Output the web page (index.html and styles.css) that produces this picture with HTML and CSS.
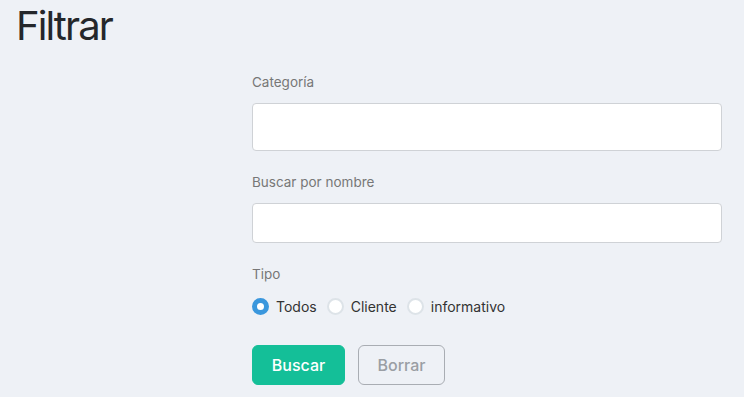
FILE: index.html
```html
<!DOCTYPE html>
<html lang="es">
<head>
<meta charset="utf-8">
<title>Filtrar</title>
<link rel="stylesheet" href="styles.css">
</head>
<body>
<h1 class="title">Filtrar</h1>
<form class="filter">
  <div class="field">
    <label class="label" for="cat">Categoría</label>
    <input class="input input-lg" id="cat" type="text">
  </div>
  <div class="field">
    <label class="label" for="name">Buscar por nombre</label>
    <input class="input" id="name" type="text">
  </div>
  <div class="field">
    <span class="label">Tipo</span>
    <div class="radios">
      <label class="radio"><span class="dot checked"></span>Todos</label>
      <label class="radio"><span class="dot"></span>Cliente</label>
      <label class="radio"><span class="dot"></span>informativo</label>
    </div>
  </div>
  <div class="actions">
    <button type="button" class="btn btn-primary">Buscar</button>
    <button type="button" class="btn btn-outline">Borrar</button>
  </div>
</form>
</body>
</html>
```
FILE: styles.css
```css
* { box-sizing: border-box; }
html, body { margin: 0; padding: 0; }
body {
  background: #eef1f6;
  font-family: Inter, "Noto Sans", sans-serif;
  color: #333;
  width: 744px;
  height: 397px;
  overflow: hidden;
}
.title {
  margin: 0;
  padding: 2px 0 0 16px;
  font-size: 40px;
  font-weight: 400;
  letter-spacing: -1.9px;
  color: #24272b;
  line-height: 48px;
}
.filter {
  margin-left: 252px;
  width: 470px;
  padding-top: 20px;
  display: flex;
  flex-direction: column;
}
.field {
  display: flex;
  flex-direction: column;
  margin-bottom: 19px;
}
.label {
  font-size: 13.5px;
  color: #777;
  line-height: 24px;
  margin-bottom: 9px;
}
.input {
  height: 40px;
  background: #fff;
  border: 1px solid #cfd2d6;
  border-radius: 4px;
  outline: none;
}
.input-lg { height: 48px; }
.radios {
  display: flex;
  gap: 10px;
  height: 30px;
  align-items: center;
  margin-top: -4px;
}
.radio {
  display: flex;
  align-items: center;
  gap: 7px;
  font-size: 14px;
  color: #333;
}
.dot {
  width: 17px;
  height: 17px;
  border-radius: 50%;
  background: #fff;
  border: 2px solid #dde3e8;
}
.dot.checked {
  border: 5px solid #3a97dd;
}
.actions {
  display: flex;
  gap: 13px;
  margin-top: 5px;
}
.btn {
  height: 40px;
  border-radius: 6px;
  font-family: Inter, "Noto Sans", sans-serif;
  font-size: 16px;
  font-weight: 500;
  cursor: pointer;
}
.btn-primary {
  width: 93px;
  background: #14bf98;
  border: 1px solid #14bf98;
  color: #fff;
}
.btn-outline {
  width: 87px;
  background: transparent;
  border: 1px solid #a9adb3;
  color: #9a9ea4;
}
```
